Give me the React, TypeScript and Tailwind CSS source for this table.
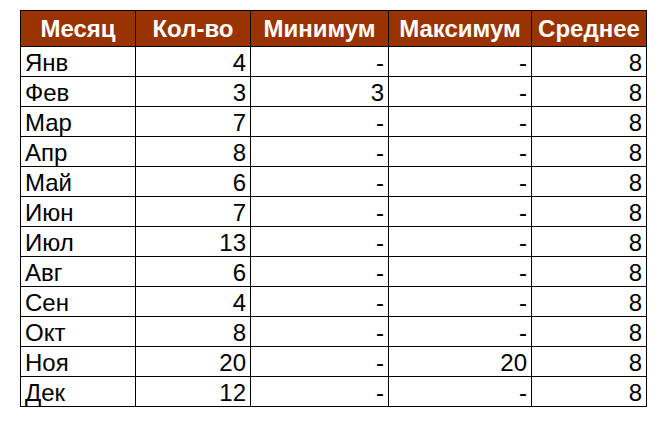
import React from "react";

const rows: [string, string, string, string, string][] = [
  ["Янв", "4", "-", "-", "8"],
  ["Фев", "3", "3", "-", "8"],
  ["Мар", "7", "-", "-", "8"],
  ["Апр", "8", "-", "-", "8"],
  ["Май", "6", "-", "-", "8"],
  ["Июн", "7", "-", "-", "8"],
  ["Июл", "13", "-", "-", "8"],
  ["Авг", "6", "-", "-", "8"],
  ["Сен", "4", "-", "-", "8"],
  ["Окт", "8", "-", "-", "8"],
  ["Ноя", "20", "-", "20", "8"],
  ["Дек", "12", "-", "-", "8"],
];

const headers = ["Месяц", "Кол-во", "Минимум", "Максимум", "Среднее"];
const widths = ["w-[115px]", "w-[115px]", "w-[138px]", "w-[143px]", "w-[115px]"];

export default function App() {
  return (
    <div className="w-[660px] h-[426px] bg-white pt-[10px] pl-[20px] font-['Liberation_Sans',Arial,sans-serif]">
      <table className="border-collapse table-fixed text-[24px] leading-none">
        <colgroup>
          {widths.map((w, i) => (
            <col key={i} className={w} />
          ))}
        </colgroup>
        <thead>
          <tr className="h-[36px] bg-[#993300]">
            {headers.map((h) => (
              <th key={h} className="border border-black text-white font-bold text-center p-0 pt-[1px]">
                {h}
              </th>
            ))}
          </tr>
        </thead>
        <tbody>
          {rows.map((r) => (
            <tr key={r[0]} className="h-[30px]">
              {r.map((c, i) => (
                <td
                  key={i}
                  className={
                    "border border-black text-black pt-[3px] pb-0 " +
                    (i === 0 ? "text-left pl-[4px]" : "text-right pr-[4px]")
                  }
                >
                  {c}
                </td>
              ))}
            </tr>
          ))}
        </tbody>
      </table>
    </div>
  );
}
